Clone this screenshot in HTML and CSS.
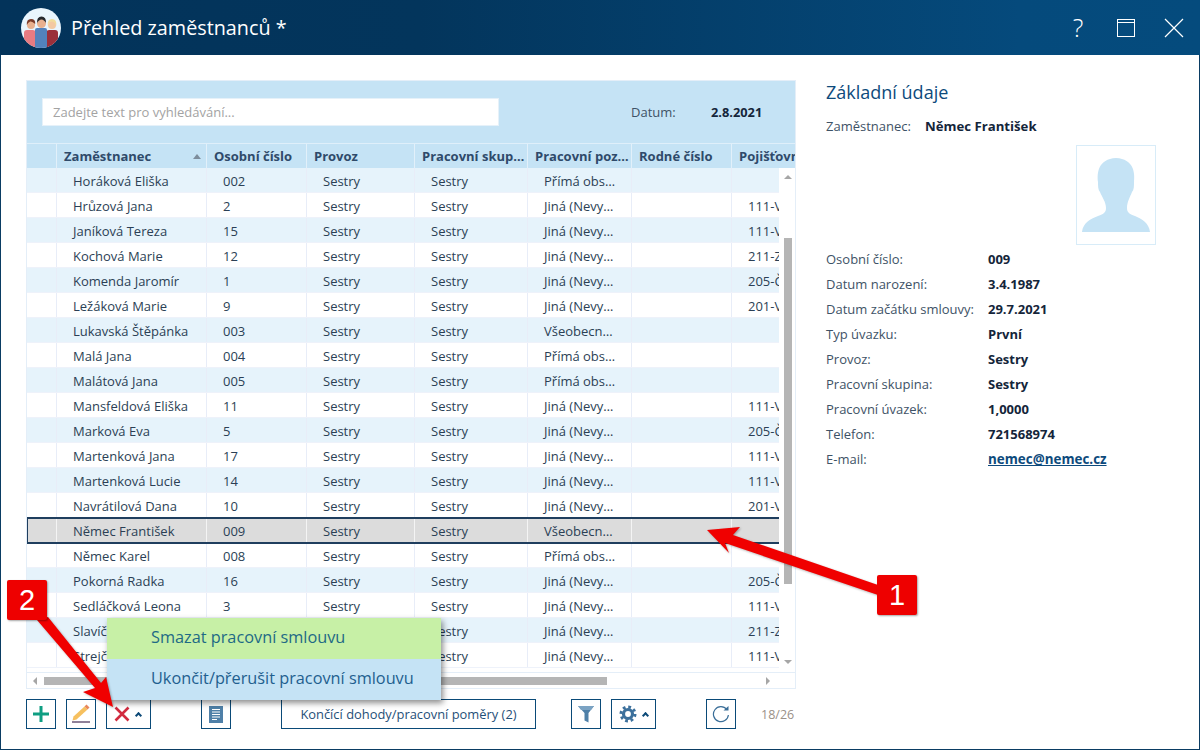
FILE: index.html
```html
<!DOCTYPE html>
<html lang="cs">
<head>
<meta charset="utf-8">
<title>Přehled zaměstnanců</title>
<link rel="stylesheet" href="styles.css">
</head>
<body>
<div class="window">
  <header class="titlebar">
    <svg class="avatar" width="40" height="40" viewBox="0 0 40 40">
      <defs><clipPath id="disc"><circle cx="20" cy="20" r="20"/></clipPath></defs>
      <circle cx="20" cy="20" r="20" fill="#e9f5fd"/>
      <g clip-path="url(#disc)">
        <path d="M3 40V25q0-3 3-3h6l3 1v17z" fill="#e77b82"/>
        <path d="M37 40V25q0-3-3-3h-6l-3 1v17z" fill="#9a2f3a"/>
        <circle cx="10" cy="17" r="4" fill="#e8b08e"/>
        <path d="M5.800 17q-.5-6 4.200-6t4.200 5q-3-3-5-2.500t-3.400 3.500z" fill="#7b3a28"/>
        <circle cx="31" cy="17" r="4" fill="#f3c9a3"/>
        <path d="M26.800 18q-.8-7 4.200-7t4.300 7q-1-4-4.300-4.500t-4.200 4.500z" fill="#f1dc9a"/>
        <path d="M14 40V22q0-2 2-2h8q2 0 2 2v18z" fill="#5282bc"/>
        <circle cx="20.500" cy="15.500" r="4.500" fill="#e8b08e"/>
        <path d="M16 15q-.3-6.500 4.500-6.500t4.500 6.500q-2-3.500-4.500-3.500t-4.500 3.500z" fill="#26292e"/>
      </g>
    </svg>
    <h1 class="title">Přehled zaměstnanců *</h1>
    <div class="win-controls">
      <span class="win-btn win-help">?</span>
      <span class="win-btn">
        <svg width="18" height="18" viewBox="0 0 18 18" fill="none" stroke="#fff"><rect x=".5" y=".5" width="17" height="17" stroke-width="1"/><path d="M1 3.500h16"/></svg>
      </span>
      <span class="win-btn">
        <svg width="20" height="20" viewBox="0 0 20 20" fill="none" stroke="#fff" stroke-width="1.200"><path d="M1 1l18 18M19 1L1 19"/></svg>
      </span>
    </div>
  </header>

  <main class="content">
    <section class="left">
      <div class="grid">
        <div class="filter-band">
          <input class="search" type="text" placeholder="Zadejte text pro vyhledávání...">
          <span class="date-label">Datum:</span>
          <strong class="date-value">2.8.2021</strong>
        </div>
        <div class="head">
          <div></div>
          <div class="sorted">Zaměstnanec<i class="sort"></i></div>
          <div>Osobní číslo</div>
          <div>Provoz</div>
          <div>Pracovní skup…</div>
          <div>Pracovní poz…</div>
          <div>Rodné číslo</div>
          <div>Pojišťovna</div>
        </div>
        <div class="body">
          <div class="rows">
            <div class="row"><div></div><div>Horáková Eliška</div><div>002</div><div>Sestry</div><div>Sestry</div><div>Přímá obs…</div><div></div><div></div></div>
            <div class="row"><div></div><div>Hrůzová Jana</div><div>2</div><div>Sestry</div><div>Sestry</div><div>Jiná (Nevy…</div><div></div><div>111-VZP</div></div>
            <div class="row"><div></div><div>Janíková Tereza</div><div>15</div><div>Sestry</div><div>Sestry</div><div>Jiná (Nevy…</div><div></div><div>111-VZP</div></div>
            <div class="row"><div></div><div>Kochová Marie</div><div>12</div><div>Sestry</div><div>Sestry</div><div>Jiná (Nevy…</div><div></div><div>211-ZP</div></div>
            <div class="row"><div></div><div>Komenda Jaromír</div><div>1</div><div>Sestry</div><div>Sestry</div><div>Jiná (Nevy…</div><div></div><div>205-ČPZP</div></div>
            <div class="row"><div></div><div>Ležáková Marie</div><div>9</div><div>Sestry</div><div>Sestry</div><div>Jiná (Nevy…</div><div></div><div>201-VoZP</div></div>
            <div class="row"><div></div><div>Lukavská Štěpánka</div><div>003</div><div>Sestry</div><div>Sestry</div><div>Všeobecn…</div><div></div><div></div></div>
            <div class="row"><div></div><div>Malá Jana</div><div>004</div><div>Sestry</div><div>Sestry</div><div>Přímá obs…</div><div></div><div></div></div>
            <div class="row"><div></div><div>Malátová Jana</div><div>005</div><div>Sestry</div><div>Sestry</div><div>Přímá obs…</div><div></div><div></div></div>
            <div class="row"><div></div><div>Mansfeldová Eliška</div><div>11</div><div>Sestry</div><div>Sestry</div><div>Jiná (Nevy…</div><div></div><div>111-VZP</div></div>
            <div class="row"><div></div><div>Marková Eva</div><div>5</div><div>Sestry</div><div>Sestry</div><div>Jiná (Nevy…</div><div></div><div>205-ČPZP</div></div>
            <div class="row"><div></div><div>Martenková Jana</div><div>17</div><div>Sestry</div><div>Sestry</div><div>Jiná (Nevy…</div><div></div><div>111-VZP</div></div>
            <div class="row"><div></div><div>Martenková Lucie</div><div>14</div><div>Sestry</div><div>Sestry</div><div>Jiná (Nevy…</div><div></div><div>111-VZP</div></div>
            <div class="row"><div></div><div>Navrátilová Dana</div><div>10</div><div>Sestry</div><div>Sestry</div><div>Jiná (Nevy…</div><div></div><div>201-VoZP</div></div>
            <div class="row selected"><div></div><div>Němec František</div><div>009</div><div>Sestry</div><div>Sestry</div><div>Všeobecn…</div><div></div><div></div></div>
            <div class="row"><div></div><div>Němec Karel</div><div>008</div><div>Sestry</div><div>Sestry</div><div>Přímá obs…</div><div></div><div></div></div>
            <div class="row"><div></div><div>Pokorná Radka</div><div>16</div><div>Sestry</div><div>Sestry</div><div>Jiná (Nevy…</div><div></div><div>205-ČPZP</div></div>
            <div class="row"><div></div><div>Sedláčková Leona</div><div>3</div><div>Sestry</div><div>Sestry</div><div>Jiná (Nevy…</div><div></div><div>111-VZP</div></div>
            <div class="row"><div></div><div>Slavíčková Eva</div><div>6</div><div>Sestry</div><div>Sestry</div><div>Jiná (Nevy…</div><div></div><div>211-ZP</div></div>
            <div class="row"><div></div><div>Strejčková Jana</div><div>7</div><div>Sestry</div><div>Sestry</div><div>Jiná (Nevy…</div><div></div><div>111-VZP</div></div>
          </div>
          <div class="vscroll">
            <div class="vtrack-top"><i class="tri tri-up"></i></div>
            <div class="vthumb"></div>
            <div class="vtrack-bottom"><i class="tri tri-down"></i></div>
          </div>
        </div>
        <div class="hscroll">
          <i class="tri tri-left"></i>
          <div class="hthumb"></div>
          <i class="tri tri-right"></i>
        </div>
      </div>

      <div class="toolbar">
        <button class="btn">
          <svg width="18" height="18" viewBox="0 0 18 18"><path d="M9 1v16M1 9h16" stroke="#0f9e82" stroke-width="3" fill="none"/></svg>
        </button>
        <button class="btn ml10">
          <svg width="28" height="28" viewBox="0 0 28 28"><path d="M6.500 16.500L17.500 6.500l3 3L9.500 19.500l-4 1z" fill="#f6c05f"/><path d="M17.500 6.500l2-2 3 3-2 2z" fill="#e8875a"/><path d="M5 22h18" stroke="#8f8199" stroke-width="2"/></svg>
        </button>
        <button class="btn btn-wide ml10">
          <svg width="16" height="16" viewBox="0 0 16 16"><path d="M1.500 1.500l13 13M14.500 1.500l-13 13" stroke="#d12b3f" stroke-width="2.600" fill="none"/></svg>
          <i class="caret"></i>
        </button>
        <button class="btn ml50">
          <svg width="16" height="19" viewBox="0 0 16 19"><rect x="1" y="1" width="14" height="17" fill="#4f80a8"/><path d="M4 4.500h8M4 7h8M4 9.500h8M4 12h8M4 14.500h5" stroke="#fff" stroke-width="1"/></svg>
        </button>
        <button class="btn btn-text ml50">Končící dohody/pracovní poměry (2)</button>
        <button class="btn ml35">
          <svg width="18" height="18" viewBox="0 0 18 18"><path d="M1 1h16l-5.500 7v9.500l-4-2V8z" fill="#4f80a8"/><path d="M1 1h16l-3 4H4z" fill="#7ba3c3"/></svg>
        </button>
        <button class="btn btn-wide ml10">
          <svg width="18" height="18" viewBox="0 0 18 18" fill="none" stroke="#3c709c"><circle cx="9" cy="9" r="7" stroke-width="3" stroke-dasharray="2.750 2.750"/><circle cx="9" cy="9" r="4.500" stroke-width="3.200"/></svg>
          <i class="caret"></i>
        </button>
        <button class="btn ml50">
          <svg width="18" height="18" viewBox="0 0 18 18" fill="none"><path d="M14.800 4.500A7.500 7.500 0 1 0 16.400 10" stroke="#3a6e98" stroke-width="1.200"/><path d="M11.500 5.500h5V1z" fill="#3a6e98"/></svg>
        </button>
        <span class="count">18/26</span>
      </div>
    </section>

    <aside class="detail">
      <h2 class="detail-title">Základní údaje</h2>
      <div class="employee"><span class="employee-label">Zaměstnanec:</span><strong>Němec František</strong></div>
      <div class="photo">
        <svg width="78" height="98" viewBox="1 1 78 98"><path d="M6 87C7 78 14 74 22 71C28 69 30 67 30 63C30 57 26 52 24 47C22 45 22 41 22 37C21 28 22 14 40 13C58 14 59 28 58 37C58 41 58 45 56 47C54 52 51 57 51 63C51 67 53 69 59 71C66 74 73 78 74 87Z" fill="#c5e3f5"/></svg>
      </div>
      <dl class="facts">
        <dt>Osobní číslo:</dt><dd>009</dd>
        <dt>Datum narození:</dt><dd>3.4.1987</dd>
        <dt>Datum začátku smlouvy:</dt><dd>29.7.2021</dd>
        <dt>Typ úvazku:</dt><dd>První</dd>
        <dt>Provoz:</dt><dd>Sestry</dd>
        <dt>Pracovní skupina:</dt><dd>Sestry</dd>
        <dt>Pracovní úvazek:</dt><dd>1,0000</dd>
        <dt>Telefon:</dt><dd>721568974</dd>
        <dt>E-mail:</dt><dd><a class="mail" href="#">nemec@nemec.cz</a></dd>
      </dl>
    </aside>
  </main>

  <div class="menu">
    <div class="menu-item menu-active">Smazat pracovní smlouvu</div>
    <div class="menu-item">Ukončit/přerušit pracovní smlouvu</div>
  </div>

  <svg class="arrows" width="1200" height="750" viewBox="0 0 1200 750">
    <polygon points="707,530 740,527 733,535 878,585 878,595 725,543 729,553" fill="#f00000"/>
    <polygon points="37,620 48,617 101,683 106,677 113,707 83,692 95,688" fill="#f00000"/>
  </svg>
  <div class="badge badge-one">1</div>
  <div class="badge badge-two">2</div>
</div>
</body>
</html>
```
FILE: styles.css
```css
* { box-sizing: border-box; }
html, body { margin: 0; padding: 0; }
body {
  width: 1200px;
  height: 750px;
  overflow: hidden;
  font-family: "Open Sans", "Noto Sans", sans-serif;
  font-size: 13px;
  color: #2b3f55;
  background: #fff;
}
.window {
  position: relative;
  width: 1200px;
  height: 750px;
  display: flex;
  flex-direction: column;
  border: 1px solid #0a3c63;
  border-top: 0;
}
.titlebar {
  flex: none;
  height: 55px;
  display: flex;
  align-items: center;
  margin: 0 -1px;
  padding-left: 21px;
  background: linear-gradient(90deg, #03335a 0%, #03355c 35%, #054a7c 85%, #054b7d 100%);
  color: #fff;
}
.avatar { flex: none; }
.title {
  margin: 0 0 0 10px;
  font-size: 19.800px;
  font-weight: 400;
  line-height: 27px;
}
.win-controls { margin-left: auto; display: flex; padding-right: 2px; }
.win-btn {
  width: 48px;
  height: 55px;
  display: flex;
  align-items: center;
  justify-content: center;
}
.win-help { font-size: 25px; font-weight: 300; line-height: 1; }

.content { flex: 1; display: flex; min-height: 0; }
.left { flex: none; width: 795px; padding: 25px 0 0 25px; }
.grid {
  width: 770px;
  height: 609px;
  border: 1px solid #e4eef8;
  display: flex;
  flex-direction: column;
}
.filter-band {
  flex: none;
  height: 62px;
  padding-left: 15px;
  display: flex;
  align-items: center;
  background: #c5e3f5;
}
.search {
  width: 457px;
  height: 28px;
  padding: 0 10px;
  border: 1px solid #e6f1f9;
  outline: 0;
  background: #fff;
  font: 13px "Open Sans", sans-serif;
  color: #2b3f55;
}
.search::placeholder { color: #a3a3a3; opacity: 1; }
.date-label { margin-left: 132px; width: 80px; color: #3e5266; }
.date-value { font-weight: 700; font-size: 12.800px; color: #14253a; }

.head, .row {
  display: grid;
  grid-template-columns: 30px 150px 100px 108px 113px 104px 100px 60px;
}
.head {
  flex: none;
  height: 25px;
  grid-template-columns: 30px 150px 100px 108px 113px 104px 100px 63px;
  background: #c5e3f5;
  border-top: 1px solid #dfeffa;
  font-weight: 700;
  color: #2f4a6a;
  line-height: 24px;
  overflow: hidden;
}
.head > div {
  padding-left: 7px;
  border-right: 1px solid #e2f0fa;
  white-space: nowrap;
  overflow: hidden;
}
.head > div:last-child { border-right: 0; }
.sorted { position: relative; }
.sort {
  position: absolute;
  right: 5px;
  top: 10px;
  border-left: 4.500px solid transparent;
  border-right: 4.500px solid transparent;
  border-bottom: 5px solid #7d8d9c;
}
.body { flex: none; height: 504px; display: flex; }
.rows { width: 752px; overflow: hidden; background: #fff; }
.row {
  height: 25px;
  line-height: 25px;
  border-bottom: 1px solid #eef2fa;
  white-space: nowrap;
}
.row:nth-child(odd) { background: #e6f3fb; }
.row > div {
  padding-top: 1px;
  padding-left: 16px;
  border-right: 1px solid #e8edf8;
  overflow: hidden;
}
.row > div:last-child { border-right: 0; }
.row.selected {
  position: relative;
  height: 27px;
  margin: -1px 0 -1px -1px;
  padding-left: 0;
  background: #dcdcdc;
  border-top: 2px solid #1f3e5e;
  border-bottom: 2px solid #1f3e5e;
  border-left: 2px solid #1f3e5e;
  line-height: 23px;
  grid-template-columns: 29px 150px 100px 108px 113px 104px 100px 60px;
}
.row.selected > div { border-right-color: #f4f4f4; }
.vscroll { flex: none; width: 16px; display: flex; flex-direction: column; background: #fff; padding-left: 5px; }
.vtrack-top { height: 70px; padding-top: 7px; }
.vthumb { width: 8px; height: 346px; background: #b5b5b5; }
.vtrack-bottom { flex: 1; display: flex; align-items: flex-end; padding-bottom: 8px; }
.tri { display: block; width: 0; height: 0; border: 0 solid transparent; }
.tri-up, .tri-down { margin-left: 0; border-left: 4px solid transparent; border-right: 4px solid transparent; }
.tri-up { border-bottom: 4px solid #a6a6a6; }
.tri-down { border-top: 4px solid #a6a6a6; }
.tri-left, .tri-right { border-top: 4px solid transparent; border-bottom: 4px solid transparent; }
.tri-left { margin-left: 6px; border-right: 4px solid #a6a6a6; }
.tri-right { margin-left: 159px; border-left: 4px solid #a6a6a6; }
.hscroll {
  flex: 1;
  display: flex;
  align-items: center;
  border-top: 1px solid #e4eef8;
  background: #fff;
}
.hthumb { width: 563px; height: 8px; margin-left: 7px; background: #b5b5b5; }

.toolbar { display: flex; align-items: center; margin-top: 10px; height: 30px; }
.btn {
  flex: none;
  width: 30px;
  height: 30px;
  padding: 0;
  border: 1px solid #0a4a78;
  background: #fff;
  display: flex;
  align-items: center;
  justify-content: center;
  font: 12.900px "Open Sans", sans-serif;
  color: #1f4f78;
}
.btn-wide { width: 45px; justify-content: flex-start; padding-left: 7px; }
.btn-text { width: 255px; }
.ml10 { margin-left: 10px; }
.ml35 { margin-left: 35px; }
.ml50 { margin-left: 50px; }
.caret {
  display: block;
  width: 5px;
  height: 5px;
  margin-left: 6px;
  margin-top: 3px;
  border-left: 2px solid #0d4a78;
  border-top: 2px solid #0d4a78;
  transform: rotate(45deg);
}
.count { margin-left: 25px; color: #9a9088; font-size: 12.500px; }

.detail { flex: 1; padding: 25px 0 0 30px; }
.detail-title {
  margin: 0;
  height: 24px;
  font-size: 18px;
  font-weight: 400;
  line-height: 25px;
  color: #0d4a7c;
}
.employee { margin-top: 10px; height: 25px; line-height: 25px; display: flex; }
.employee-label { width: 99px; color: #3e5266; }
.employee strong { font-weight: 700; font-size: 13.200px; color: #14253a; }
.photo {
  width: 80px;
  height: 100px;
  margin: 6px 0 0 250px;
  border: 1px solid #d8ecf8;
}
.photo svg { display: block; }
.facts {
  margin: 2px 0 0;
  display: grid;
  grid-template-columns: 162px 1fr;
  grid-auto-rows: 25px;
  line-height: 25px;
}
.facts dt { color: #3e5266; }
.facts dd { margin: 0; font-weight: 700; font-size: 13px; color: #14253a; }
.mail { color: #0d4a7c; font-size: 13.400px; }

.menu {
  position: absolute;
  left: 106px;
  top: 618px;
  width: 334px;
  box-shadow: 2px 3px 6px rgba(0, 0, 0, .45);
  font-size: 16.300px;
}
.menu-item {
  height: 41px;
  padding-left: 44px;
  line-height: 39px;
  background: #c5e3f5;
  color: #1f5f8f;
}
.menu-active { background: #c7f0a6; color: #1e6a85; }

.arrows { position: absolute; left: -1px; top: 0; pointer-events: none; filter: drop-shadow(1px 1px 1px rgba(0,0,0,.3)); }
.badge {
  position: absolute;
  width: 40px;
  height: 40px;
  border-radius: 2px;
  background: #ee0000;
  color: #fff;
  font: 29px/40px "Liberation Sans", Arial, sans-serif;
  text-align: center;
  box-shadow: 1px 1px 2px rgba(0, 0, 0, .35);
}
.badge-one { left: 876px; top: 575px; }
.badge-two { left: 6px; top: 580px; }
```
